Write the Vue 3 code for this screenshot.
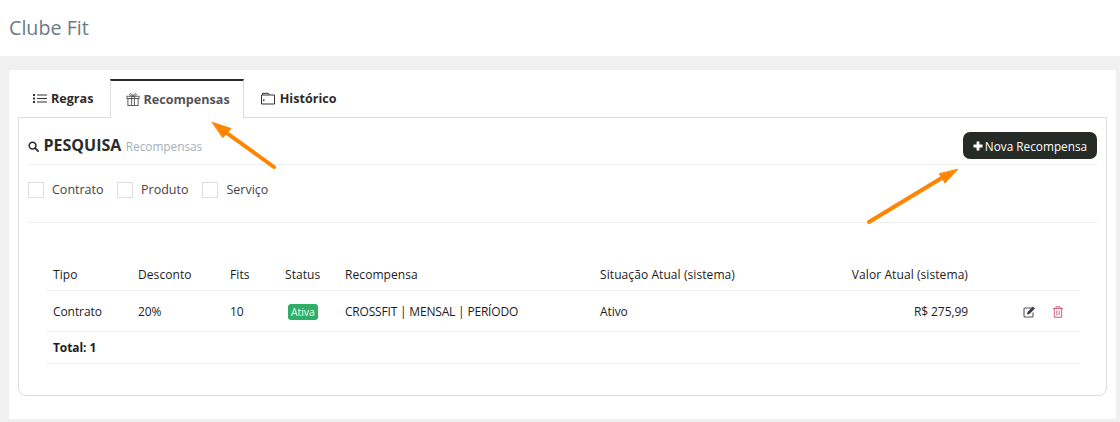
<script setup>
const columns = ['Tipo', 'Desconto', 'Fits', 'Status', 'Recompensa', 'Situação Atual (sistema)', 'Valor Atual (sistema)', '']
const filters = ['Contrato', 'Produto', 'Serviço']
</script>

<template>
  <div class="page">
    <header class="topbar"><h1>Clube Fit</h1></header>
    <main class="card">
      <nav class="tabs">
        <a class="tab first">
          <svg class="ti" viewBox="0 0 14 12"><g fill="none" stroke="#333" stroke-width="1"><path d="M4 2.500h10M4 6h10M4 9.500h10"/></g><g fill="#333"><rect x="0" y="1.500" width="2" height="2"/><rect x="0" y="5" width="2" height="2"/><rect x="0" y="8.500" width="2" height="2"/></g></svg>
          Regras
        </a>
        <a class="tab active">
          <svg class="ti" viewBox="0 0 14 14"><g fill="none" stroke="#555" stroke-width="1"><rect x="1.500" y="6" width="11" height="7.500"/><rect x="0.500" y="3.500" width="13" height="2.500"/><path d="M5.500 3.500v10M8.500 3.500v10M7 3.500C5 3.500 3 2.800 3.500 1.300 4 0 6.500 1 7 3.500ZM7 3.500C9 3.500 11 2.800 10.500 1.300 10 0 7.500 1 7 3.500Z"/></g></svg>
          Recompensas
        </a>
        <a class="tab last">
          <svg class="ti" viewBox="0 0 14 12"><g fill="none" stroke="#333" stroke-width="1"><path d="M.5 11.500V2.500h1V.8h6l1 1.700h5v9Z"/><path d="M1.500 2.500h7"/></g><rect x="2" y="7" width="1.500" height="1.500" fill="#333"/></svg>
          Histórico
        </a>
      </nav>

      <section class="panel">
        <div class="head">
          <div class="title">
            <svg class="search" viewBox="0 0 12 12"><circle cx="5" cy="5" r="3.700" fill="none" stroke="#2b2b2b" stroke-width="1.700"/><path d="M7.800 7.800 11 11" stroke="#2b2b2b" stroke-width="2" stroke-linecap="round"/></svg>
            <strong>PESQUISA</strong>
            <small>Recompensas</small>
          </div>
          <button class="new">
            <svg viewBox="0 0 10 10"><path d="M5 .5v9M.5 5h9" stroke="#fff" stroke-width="2.800"/></svg>
            Nova Recompensa
          </button>
        </div>

        <div class="filters">
          <label v-for="f in filters" :key="f" class="check"><span class="box"></span>{{ f }}</label>
        </div>

        <table>
          <colgroup>
            <col style="width:85px"><col style="width:92px"><col style="width:55px"><col style="width:60px">
            <col style="width:255px"><col style="width:170px"><col style="width:212px"><col style="width:105px">
          </colgroup>
          <thead>
            <tr>
              <th v-for="(c, i) in columns" :key="i" :class="{ right: i === 6 }">{{ c }}</th>
            </tr>
          </thead>
          <tbody>
            <tr class="data">
              <td>Contrato</td>
              <td>20%</td>
              <td>10</td>
              <td><span class="badge">Ativa</span></td>
              <td class="tight">CROSSFIT | MENSAL | PERÍODO</td>
              <td>Ativo</td>
              <td class="right">R$ 275,99</td>
              <td class="actions">
                <svg class="act" viewBox="0 0 13 12"><path d="M9 2H2a1 1 0 0 0-1 1v7a1 1 0 0 0 1 1h7a1 1 0 0 0 1-1V6.500" fill="none" stroke="#555" stroke-width="1.100"/><path d="M4.500 6 10 .6l2 2L6.500 8 4 8.500Z" fill="#3a3a4a"/></svg>
                <svg class="act trash" viewBox="0 0 10 12"><g fill="none" stroke="#cf5f78" stroke-width="1"><path d="M0 2.500h10M3 2.500V.8h4v1.700M1.300 2.500v8.800h7.400V2.500"/><path d="M3.500 4.500v5M5 4.500v5M6.500 4.500v5" stroke="#d59ab0"/></g></svg>
              </td>
            </tr>
            <tr class="total"><td colspan="8">Total: 1</td></tr>
          </tbody>
        </table>
      </section>
    </main>

    <svg class="arrows" width="1120" height="422" viewBox="0 0 1120 422">
      <g fill="#ff8400" stroke="#ff8400" stroke-linecap="round">
        <path d="M274 167 224 131" stroke-width="4" fill="none"/>
        <path d="M212.500 122.500 231 128.500 223 137.500Z" stroke-width="1"/>
        <path d="M869 222 945 176" stroke-width="4" fill="none"/>
        <path d="M957.500 169.500 945 183 939.500 174Z" stroke-width="1"/>
      </g>
    </svg>
  </div>
</template>

<style scoped>
.page {
  position: relative;
  width: 1120px;
  height: 422px;
  overflow: hidden;
  background: #f0f0f0;
  font-family: "Open Sans", sans-serif;
  font-size: 12px;
  color: #1c1c1c;
}
.topbar {
  height: 56px;
  box-sizing: border-box;
  background: #fff;
  padding: 0 0 2px 9px;
  display: flex;
  align-items: center;
}
.topbar h1 {
  margin: 0;
  font-size: 19.700px;
  font-weight: 400;
  color: #6b7a85;
}
.card {
  margin: 14px 4px 0 9px;
  height: 349px;
  background: #fff;
  padding: 9px 9px 0;
  box-sizing: border-box;
  border-radius: 2px;
}
.tabs {
  display: flex;
  height: 39px;
  font-size: 12.600px;
  font-weight: 700;
  position: relative;
  z-index: 1;
}
.tab {
  display: flex;
  align-items: center;
  gap: 4px;
  color: #2b2b2b;
}
.tab.first { padding: 0 17px 0 15px; }
.tab.last { padding: 0 15px 0 17px; gap: 5px; }
.tab.active {
  padding: 0 13px 0 15px;
  gap: 3px;
  background: #fff;
  color: #555;
  border: 1px solid #dcdcdc;
  border-top: 2px solid #26292b;
  border-bottom: 0;
  height: 39px;
  box-sizing: border-box;
}
.ti { width: 14px; height: 13px; }
.panel {
  margin-top: -1px;
  height: 279px;
  box-sizing: border-box;
  border: 1px solid #dcdcdc;
  border-radius: 0 0 8px 8px;
  padding: 0 9px;
}
.head {
  height: 47px;
  box-sizing: border-box;
  padding-top: 9px;
  display: flex;
  align-items: center;
  justify-content: space-between;
  border-bottom: 1px solid #eee;
}
.title { display: flex; align-items: baseline; gap: 4.500px; margin-top: -2px; }
.search { width: 11px; height: 11px; align-self: center; margin-top: 3px; }
.title strong { font-size: 16px; color: #2b2b2b; }
.title small { font-size: 11.800px; color: #a3afb8; }
.new {
  display: flex;
  align-items: center;
  gap: 2px;
  height: 27px;
  width: 134px;
  justify-content: center;
  border: 0;
  border-radius: 7px;
  background: #262b27;
  color: #fff;
  font: 11.800px "Open Sans", sans-serif;
  padding: 0;
}
.new svg { width: 10px; height: 10px; }
.filters {
  height: 58px;
  box-sizing: border-box;
  border-bottom: 1px solid #eee;
  display: flex;
  align-items: flex-start;
  padding-top: 16px;
  gap: 13.500px;
  font-size: 12.500px;
  color: #444;
}
.check { display: flex; align-items: center; gap: 8px; }
.check:nth-child(3) { margin-left: 0.500px; }
.box { width: 16px; height: 16px; box-sizing: border-box; border: 1px solid #ddd; }
table {
  margin: 31px 0 0 18px;
  width: 1034px;
  table-layout: fixed;
  border-collapse: collapse;
  font-size: 12px;
  color: #1c1c1c;
}
th {
  font-weight: 400;
  text-align: left;
  height: 32px;
  padding: 4px 7px 0;
  border-bottom: 1px solid #f0f0f0;
  letter-spacing: 0.08px;
}
td { padding: 0 7px; letter-spacing: -0.08px; }
td.tight { letter-spacing: -0.19px; }
.right { text-align: right; }
.data td { height: 40px; border-bottom: 1px solid #f0f0f0; }
.total td { height: 31px; font-weight: 700; border-bottom: 1px solid #f0f0f0; }
.badge {
  display: inline-block;
  background: #2fae67;
  color: #e8fff1;
  border-radius: 3px;
  padding: 0 3px;
  font-size: 10.500px;
  line-height: 16px;
  margin-left: 3px;
}
.actions { padding-left: 48px; white-space: nowrap; }
.act { width: 13px; height: 12px; vertical-align: middle; }
.trash { width: 10px; margin-left: 17px; }
.arrows { position: absolute; left: 0; top: 0; pointer-events: none; }
</style>
